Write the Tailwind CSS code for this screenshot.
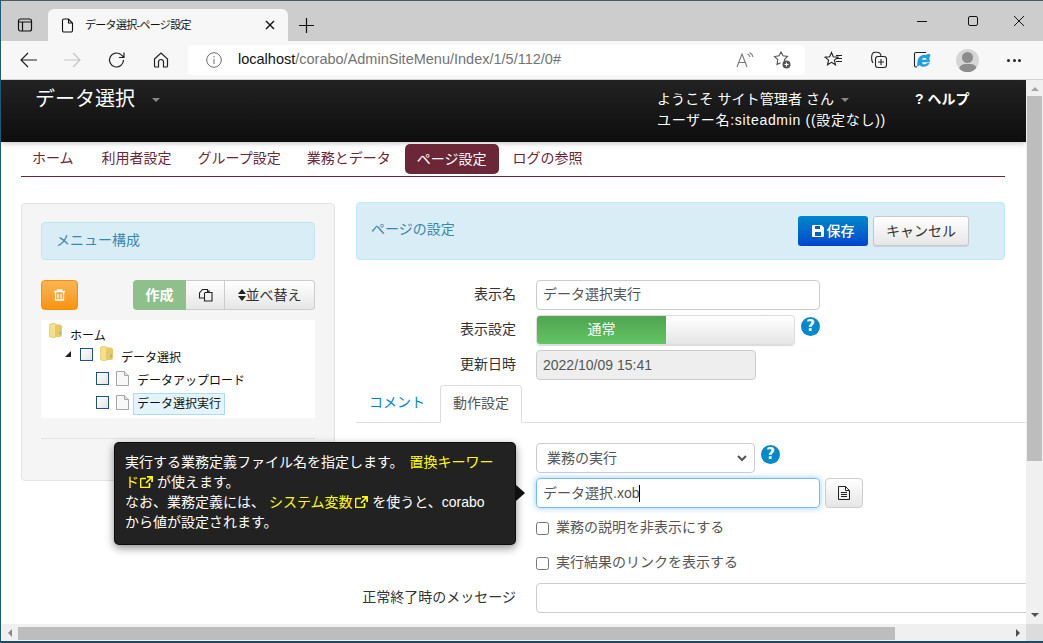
<!DOCTYPE html>
<html lang="ja">
<head>
<meta charset="utf-8">
<script src="https://cdn.jsdelivr.net/npm/@tailwindcss/browser@4"></script>
<title>データ選択-ページ設定</title>
</head>
<body class="m-0 overflow-hidden bg-white">
<div class="w-[1043px] h-[643px] flex flex-col overflow-hidden relative border-t border-t-[#4a5a66] border-l border-l-[#1c5a7a] border-b-[2px] border-b-[#1c4a60] text-[14px] text-[#333] font-['Liberation_Sans','Noto_Sans_CJK_JP',sans-serif]">

  <!-- tab strip -->
  <div class="h-[40px] shrink-0 bg-[#cdcdcd] flex items-end text-[#111]">
    <div class="w-[47px] h-[31px] flex items-start justify-center pt-[7px]">
      <svg width="16" height="16" viewBox="0 0 16 16" fill="none" stroke="#111" stroke-width="1.2"><rect x="1.500" y="2" width="13" height="12" rx="2"/><path d="M1.500 5h13M5.500 5v9" /></svg>
    </div>
    <div class="w-[240px] h-[32px] bg-[#f7f7f7] rounded-t-[6px] flex items-center pl-[13px] pr-[13px]">
      <svg width="13" height="15" viewBox="0 0 13 15" fill="none" stroke="#111" stroke-width="1.100"><path d="M1.500 2.500a1.500 1.500 0 0 1 1.500-1.500h4.500l4 4v7.500a1.500 1.500 0 0 1-1.500 1.500h-7a1.500 1.500 0 0 1-1.500-1.500zM7.500 1v4h4"/></svg>
      <span class="ml-[11px] text-[11px] tracking-[-0.7px] flex-1 whitespace-nowrap">データ選択-ページ設定</span>
      <svg width="10" height="10" viewBox="0 0 10 10" stroke="#111" stroke-width="1.400"><path d="M1 1l8 8M9 1l-8 8"/></svg>
    </div>
    <div class="w-[36px] h-[32px] flex items-center justify-center">
      <svg width="15" height="15" viewBox="0 0 15 15" stroke="#111" stroke-width="1.200"><path d="M7.500 0v15M0 7.500h15"/></svg>
    </div>
    <div class="flex-1"></div>
    <div class="h-[40px] flex items-center pr-[14px] gap-[26px]">
      <svg width="20" height="20" viewBox="0 0 20 20" stroke="#111" stroke-width="1"><path d="M0 10.500h10"/></svg>
      <svg width="20" height="20" viewBox="0 0 20 20" fill="none" stroke="#111" stroke-width="1"><rect x="5.500" y="5.500" width="9" height="9" rx="1.500"/></svg>
      <svg width="20" height="20" viewBox="0 0 20 20" stroke="#111" stroke-width="1"><path d="M5 5l10 10M15 5l-10 10"/></svg>
    </div>
  </div>

  <!-- toolbar -->
  <div class="h-[39px] shrink-0 bg-[#f7f7f7] border-b border-b-[#d4d4d4] flex items-center">
    <div class="w-[187px] flex items-center pl-[19px]">
      <svg width="18" height="16" viewBox="0 0 18 16" fill="none" stroke="#222" stroke-width="1.200"><path d="M17 8H1M8 1L1 8l7 7"/></svg>
      <svg class="ml-[25px]" width="18" height="16" viewBox="0 0 18 16" fill="none" stroke="#c4c4c4" stroke-width="1.200"><path d="M1 8h16M10 1l7 7-7 7"/></svg>
      <svg class="ml-[27px]" width="18" height="18" viewBox="0 0 18 18" fill="none" stroke="#222" stroke-width="1.200"><path d="M15.500 9a7 7 0 1 1-2.200-5.100L16 6.500M16 1.500v5h-5"/></svg>
      <svg class="ml-[27px]" width="16" height="16" viewBox="0 0 16 16" fill="none" stroke="#222" stroke-width="1.200"><path d="M1.500 7L8 1l6.500 6v7a1 1 0 0 1-1 1H10.500V10a2.500 2.500 0 0 0-5 0v5H2.500a1 1 0 0 1-1-1z"/></svg>
    </div>
    <div class="w-[617px] h-[30px] bg-white rounded-[4px] flex items-center pl-[18px] pr-[13px]">
      <svg width="16" height="16" viewBox="0 0 16 16" fill="none" stroke="#6b6b6b" stroke-width="1"><circle cx="8" cy="8" r="7.300"/><path d="M8 7v5M8 4v1.500"/></svg>
      <span class="ml-[16px] text-[14.500px] text-[#737373] flex-1 whitespace-nowrap"><span class="text-[#111]">localhost</span>/corabo/AdminSiteMenu/Index/1/5/112/0#</span>
      <svg width="18" height="16" viewBox="0 0 18 16" fill="none" stroke="#777" stroke-width="1.100"><path d="M1 15L6 2l5 13M2.800 10.500h6.400M11.500 2c1.500.7 2.300 1.700 2.500 3M13.500 0.500c2 1 3.200 2.500 3.500 4.500"/></svg>
      <svg class="ml-[18px]" width="20" height="18" viewBox="0 0 20 18" fill="none" stroke="#555" stroke-width="1.100"><path d="M12.200 11.500l.3-3 3-3-4.500-.7L9 1 7 4.800l-4.500.7 3.300 3.200-.8 4.800 3.500-1.800"/><circle cx="14.500" cy="13.500" r="4" fill="#555" stroke="none"/><path d="M14.500 11.500v4M12.500 13.500h4" stroke="#fff"/></svg>
    </div>
    <div class="flex items-center pl-[19px]">
      <svg width="20" height="18" viewBox="0 0 20 18" fill="none" stroke="#222" stroke-width="1.100"><path d="M7.500 1.500l1.800 4.300 4.700.4-3.600 3 1.100 4.600-4-2.500-4 2.500 1.100-4.600L1 6.200l4.700-.4zM13 7.500h5M12 10.500h6M12 4.500h6"/></svg>
      <svg class="ml-[26px]" width="18" height="18" viewBox="0 0 18 18" fill="none" stroke="#222" stroke-width="1.100"><path d="M3 12C1 9 1 3 3.500 1.500c1.500-.7 5 0 6 .5s1.500 3 1.500 3.500"/><rect x="5.500" y="5.500" width="11" height="11" rx="2.500"/><path d="M11 8v6M8 11h6"/></svg>
      <svg class="ml-[25px]" width="18" height="18" viewBox="0 0 18 18" fill="none"><path d="M4 16H3a1.500 1.500 0 0 1-1.500-1.500V3A1.500 1.500 0 0 1 3 1.500h10" stroke="#222" stroke-width="1.100"/><path d="M4.500 10.500c0-4.500 5-8 8.500-6.500 1-.8 3-1.500 4-.8.700.8 0 2.500-.8 3.800.6 1.300.8 2.700.6 4.200H9c.3 2.500 3.500 2.700 5 .8h2.700c-1.500 4-8 5-10.200 2-.7 1-1.500 1.500-2 1.500-.7-1 0-3.500 0-5zM9 8.700h4.700C13.500 6 9.300 6 9 8.700z" fill="#1fa0e0"/></svg>
      <div class="ml-[25px] w-[23px] h-[23px] rounded-full bg-[#d6d6d6] overflow-hidden flex flex-col items-center">
        <div class="w-[11px] h-[11px] rounded-full bg-[#8c8c8c] mt-[3px] shrink-0"></div>
        <div class="w-[18px] h-[12px] rounded-full bg-[#8c8c8c] mt-[1px] shrink-0"></div>
      </div>
      <div class="ml-[28px] flex gap-[2.500px]">
        <span class="w-[3px] h-[3px] rounded-full bg-[#222]"></span><span class="w-[3px] h-[3px] rounded-full bg-[#222]"></span><span class="w-[3px] h-[3px] rounded-full bg-[#222]"></span>
      </div>
    </div>
  </div>

  <!-- viewport -->
  <div class="flex-1 min-h-0 flex flex-col">
    <div class="flex-1 min-h-0 flex">
      <main class="w-[1025px] shrink-0 overflow-hidden bg-white flex flex-col">
        <!-- app header -->
        <header class="h-[62px] shrink-0 bg-gradient-to-b from-[#222222] to-[#0e0e0e] text-white flex shadow-[0_1px_6px_rgba(0,0,0,0.25)]">
          <div class="w-[656px] pl-[34px] pt-[5px] flex items-start">
            <span class="text-[20px] leading-[28px]">データ選択</span>
            <span class="ml-[17px] mt-[13px] w-0 h-0 border-x-[4px] border-x-transparent border-t-[4px] border-t-[#888]"></span>
          </div>
          <div class="w-[258px] pt-[9px] text-[14px] leading-[21px]">
            <div class="flex items-center whitespace-nowrap tracking-[0.1px]">ようこそ サイト管理者 さん<span class="ml-[7px] w-0 h-0 border-x-[4px] border-x-transparent border-t-[4px] border-t-[#888]"></span></div>
            <div class="whitespace-nowrap tracking-[0.7px]">ユーザー名:siteadmin ((設定なし))</div>
          </div>
          <div class="pt-[9px] text-[14px] leading-[21px] font-bold whitespace-nowrap">? ヘルプ</div>
        </header>

        <!-- nav -->
        <nav class="mx-[20px] w-[984px] h-[35px] shrink-0 border-b border-b-[#6b2737] flex items-start pt-[1px] text-[14px] text-[#6b2737] leading-[30px]">
          <a class="px-[11px]">ホーム</a>
          <a class="ml-[6px] px-[11px]">利用者設定</a>
          <a class="ml-[4px] px-[11px]">グループ設定</a>
          <a class="ml-[4px] px-[11px]">業務とデータ</a>
          <a class="ml-[3px] mt-[1px] px-[12px] bg-[#6b2737] text-white rounded-[5px]">ページ設定</a>
          <a class="ml-[3px] px-[11px]">ログの参照</a>
        </nav>

        <div class="flex items-start pl-[20px] pt-[26px] w-[1025px] shrink-0">
          <!-- left panel -->
          <aside class="w-[314px] h-[278px] shrink-0 bg-[#f5f5f5] border border-[#e3e3e3] rounded-[4px] px-[19px] pt-[18px]">
            <div class="h-[38px] bg-[#d9edf7] border border-[#bce8f1] rounded-[4px] pl-[14px] leading-[34px] text-[#3a87ad]">メニュー構成</div>
            <div class="mt-[20px] flex justify-between">
              <button class="w-[37px] h-[30px] rounded-[4px] border border-[#f0900f] bg-gradient-to-b from-[#fbb450] to-[#f89406] flex items-center justify-center">
                <svg width="11" height="12" viewBox="0 0 11 12" fill="none" stroke="#fff" stroke-width="1.300"><path d="M0 2.500h11M3.500 2.500V1h4v1.500M1.500 3v8h8V3M4 5v4.500M7 5v4.500"/></svg>
              </button>
              <div class="flex h-[30px]">
                <button class="w-[53px] bg-[#8fc08b] text-white font-bold rounded-l-[4px] text-[14px]">作成</button>
                <button class="w-[39px] border-y border-r border-[#ccc] bg-gradient-to-b from-white to-[#e6e6e6] flex items-center justify-center">
                  <svg width="15" height="14" viewBox="0 0 15 14" fill="none" stroke="#222" stroke-width="1.100"><path d="M7 4.500h3.500l3.500 0v8.500H6.500V4.500M6.500 10H1.500V5L4.500 1.500H9.500V4.500M9.500 4.500L11.500 2.500"/></svg>
                </button>
                <button class="w-[90px] border-y border-r border-[#ccc] rounded-r-[4px] bg-gradient-to-b from-white to-[#e6e6e6] text-[#333] text-[14px] whitespace-nowrap flex items-center justify-center">
                  <svg width="8" height="12" viewBox="0 0 8 12" fill="#222"><path d="M4 0l4 5H0zM4 12l4-5H0z"/></svg>並べ替え
                </button>
              </div>
            </div>
            <div class="mt-[10px] h-[98px] bg-white pl-[8px] text-[12px] text-[#111]">
              <div class="h-[22px] flex items-center">
                <svg width="13" height="16" viewBox="0 0 13 15"><rect x="0" y="0" width="8" height="14" rx="3" fill="#f3e08a" stroke="#d6bd5a" stroke-width=".6"/><rect x="6" y="1" width="7" height="12.500" rx="2.500" fill="#e6c965"/><rect x="10.500" y="8" width="1.500" height="3" fill="#7fb6d6"/></svg>
                <span class="ml-[8px] pt-[10px]">ホーム</span>
              </div>
              <div class="h-[24px] flex items-center pl-[16px]">
                <span class="w-0 h-0 border-l-[6px] border-l-transparent border-b-[6px] border-b-[#222]"></span>
                <span class="ml-[9px] w-[13px] h-[13px] border-[1.500px] border-[#1c5485] bg-gradient-to-br from-white to-[#e4e4e4]"></span>
                <svg class="ml-[7px]" width="13" height="16" viewBox="0 0 13 15"><rect x="0" y="0" width="8" height="14" rx="3" fill="#f3e08a" stroke="#d6bd5a" stroke-width=".6"/><rect x="6" y="1" width="7" height="12.500" rx="2.500" fill="#e6c965"/><rect x="10.500" y="8" width="1.500" height="3" fill="#7fb6d6"/></svg>
                <span class="ml-[8px] pt-[8px]">データ選択</span>
              </div>
              <div class="h-[24px] flex items-center pl-[47px]">
                <span class="w-[13px] h-[13px] border-[1.500px] border-[#1c5485] bg-gradient-to-br from-white to-[#e4e4e4]"></span>
                <svg class="ml-[7px]" width="13" height="15" viewBox="0 0 13 15"><path d="M.5.500h8l4 4v10H.5z" fill="#f8f8f8" stroke="#a5a5a5"/><path d="M8.500.500v4h4" fill="#e4e4e4" stroke="#a5a5a5"/></svg>
                <span class="ml-[8px] pt-[6px]">データアップロード</span>
              </div>
              <div class="h-[24px] flex items-center pl-[47px]">
                <span class="w-[13px] h-[13px] border-[1.500px] border-[#1c5485] bg-gradient-to-br from-white to-[#e4e4e4]"></span>
                <svg class="ml-[7px]" width="13" height="15" viewBox="0 0 13 15"><path d="M.5.500h8l4 4v10H.5z" fill="#f8f8f8" stroke="#a5a5a5"/><path d="M8.500.500v4h4" fill="#e4e4e4" stroke="#a5a5a5"/></svg>
                <span class="ml-[4px] mt-[3px] px-[3px] h-[22px] leading-[20px] border border-[#a8dcfa] bg-[#e3f4fd]">データ選択実行</span>
              </div>
            </div>
            <div class="mt-[20px] border-t border-[#e3e3e3]"></div>
          </aside>

          <!-- right column -->
          <section class="ml-[21px] -mt-px w-[670px] shrink-0">
            <div class="w-[649px] h-[58px] bg-[#d9edf7] border border-[#bce8f1] rounded-[4px] flex items-center pl-[14px]">
              <span class="text-[#3a87ad] flex-1 text-[14px] pb-[3px]">ページの設定</span>
              <button class="w-[70px] h-[30px] rounded-[3px] bg-gradient-to-b from-[#0088cc] to-[#0044cc] text-white text-[14px] font-medium flex items-center justify-center gap-[3px]">
                <svg width="12" height="12" viewBox="0 0 12 12"><path d="M0 1a1 1 0 0 1 1-1h8.500L12 2.500V11a1 1 0 0 1-1 1H1a1 1 0 0 1-1-1z" fill="#fff"/><path d="M3 1h5v3H3zM3 7h6v4H3z" fill="#0a5cc8"/></svg>保存
              </button>
              <button class="ml-[5px] mr-[35px] w-[96px] h-[30px] rounded-[3px] border border-[#c8c8c8] bg-gradient-to-b from-white to-[#e6e6e6] text-[#333] text-[14px] shadow-[0_1px_1px_rgba(0,0,0,0.1)]">キャンセル</button>
            </div>

            <div class="mt-[20px] flex items-center h-[30px]">
              <label class="w-[160px] text-right pb-[2px]">表示名</label>
              <div class="ml-[20px] w-[284px] h-[30px] border border-[#ccc] rounded-[4px] px-[6px] leading-[26px] text-[#555]">データ選択実行</div>
            </div>
            <div class="mt-[5px] flex items-center h-[30px]">
              <label class="w-[160px] text-right pb-[2px]">表示設定</label>
              <div class="ml-[20px] w-[259px] h-[30px] border border-[#ddd] rounded-[4px] overflow-hidden flex bg-gradient-to-b from-white to-[#e6e6e6] shadow-[0_1px_1px_rgba(0,0,0,0.15)]">
                <div class="w-[129px] bg-gradient-to-b from-[#51a351] to-[#62c462] text-white text-center leading-[27px] text-[14px]">通常</div>
              </div>
              <span class="ml-[6px] mb-[7px] w-[19px] h-[19px] rounded-full bg-[#0088cc] text-white text-[15px] font-bold leading-[19px] text-center font-['DejaVu_Sans',sans-serif]">?</span>
            </div>
            <div class="mt-[5px] flex items-center h-[30px]">
              <label class="w-[160px] text-right pb-[2px]">更新日時</label>
              <div class="ml-[20px] w-[220px] h-[30px] border border-[#ccc] rounded-[4px] bg-[#eee] px-[6px] leading-[28px] text-[#555]">2022/10/09 15:41</div>
            </div>

            <div class="mt-[5px] h-[38px] border-b border-[#ddd] flex items-end pl-[13px]">
              <a class="w-[71px] h-[37px] leading-[34px] text-[#0088cc]">コメント</a>
              <a class="w-[82px] h-[38px] border border-[#ddd] border-b-white rounded-t-[4px] bg-white text-center leading-[34px] text-[#555] relative top-px">動作設定</a>
            </div>

            <div class="mt-[20px] ml-[180px] flex items-start h-[30px]">
              <div class="w-[219px] h-[30px] border border-[#ccc] rounded-[4px] pl-[10px] pr-[7px] flex items-center justify-between text-[14px] text-[#555]">
                業務の実行
                <svg width="10" height="7" viewBox="0 0 10 7" fill="none" stroke="#555" stroke-width="2"><path d="M1 1l4 4 4-4"/></svg>
              </div>
              <span class="ml-[6px] w-[19px] h-[19px] mt-[2px] rounded-full bg-[#0088cc] text-white text-[15px] font-bold leading-[19px] text-center font-['DejaVu_Sans',sans-serif]">?</span>
            </div>
            <div class="mt-[5px] ml-[180px] flex h-[30px]">
              <div class="w-[284px] h-[30px] border border-[#74bdf0] rounded-[4px] pl-[6px] flex items-center text-[#555] shadow-[0_0_6px_rgba(82,168,236,0.6)]">データ選択.xob<span class="w-px h-[17px] bg-black"></span></div>
              <button class="ml-[5px] w-[38px] h-[30px] border border-[#ccc] rounded-[4px] bg-gradient-to-b from-white to-[#e6e6e6] flex items-center justify-center">
                <svg width="12" height="14" viewBox="0 0 12 14" fill="none" stroke="#222" stroke-width="1"><path d="M.5.500h7l4 4v9h-11zM7.500.500v4h4M3 6.500h6M3 8.500h6M3 10.500h6"/></svg>
              </button>
            </div>
            <div class="mt-[10px] ml-[180px] flex items-center h-[18px] text-[#555]">
              <span class="w-[13px] h-[13px] border border-[#767676] rounded-[2.500px] bg-white mt-[2px]"></span>
              <span class="ml-[7px]">業務の説明を非表示にする</span>
            </div>
            <div class="mt-[17px] ml-[180px] flex items-center h-[18px] text-[#555]">
              <span class="w-[13px] h-[13px] border border-[#767676] rounded-[2.500px] bg-white mt-[2px]"></span>
              <span class="ml-[7px]">実行結果のリンクを表示する</span>
            </div>
            <div class="mt-[12px] flex items-center h-[30px] w-[720px]">
              <label class="w-[160px] text-right whitespace-nowrap pb-[2px]">正常終了時のメッセージ</label>
              <div class="ml-[20px] w-[540px] h-[30px] border border-[#ccc] rounded-[4px] bg-white"></div>
            </div>
          </section>
        </div>
      </main>

      <!-- vertical scrollbar -->
      <div class="w-[17px] shrink-0 bg-[#f0f0f0] flex flex-col items-center justify-between">
        <div class="w-full flex flex-col items-center">
          <span class="mt-[7px] w-0 h-0 border-x-[4px] border-x-transparent border-b-[4px] border-b-[#a3a3a3]"></span>
          <div class="mt-[5px] w-[15px] h-[365px] bg-[#bdbdbd]"></div>
        </div>
        <span class="mb-[7px] w-0 h-0 border-x-[4px] border-x-transparent border-t-[4px] border-t-[#505050]"></span>
      </div>
    </div>
    <!-- horizontal scrollbar -->
    <div class="h-[17px] shrink-0 bg-[#f0f0f0] flex items-center">
      <div class="w-[17px] flex justify-center"><span class="w-0 h-0 border-y-[4px] border-y-transparent border-r-[4px] border-r-[#8a8a8a]"></span></div>
      <div class="w-[877px] h-[13px] mt-[2px] bg-[#bdbdbd]"></div>
      <div class="flex-1"></div>
      <span class="mr-[6px] w-0 h-0 border-y-[4px] border-y-transparent border-l-[4px] border-l-[#505050]"></span>
      <div class="w-[17px] h-full bg-[#dcdcdc]"></div>
    </div>
  </div>

  <!-- tooltip -->
  <div class="absolute left-[113px] top-[441px] w-[402px] h-[103px] bg-[#222] rounded-[5px] border border-black/60 shadow-[0_3px_8px_rgba(0,0,0,0.45)] px-[10px] pt-[9px] text-white text-[14px] leading-[20px]">
    実行する業務定義ファイル名を指定します。 <span class="text-[#ffff00] ml-[2px]">置換キーワー<br>ド<svg class="inline align-[-1px] ml-[1px]" width="13" height="12" viewBox="0 0 13 12" fill="none" stroke="#ffff00" stroke-width="1.700"><path d="M9.500 7v3.500a1 1 0 0 1-1 1h-7a1 1 0 0 1-1-1v-7a1 1 0 0 1 1-1H6M7 .900h5.100V6M12 1L6 7"/></svg></span> が使えます。<br>
    なお、業務定義には、 <span class="text-[#ffff00]">システム変数<svg class="inline align-[-1px] ml-[3px]" width="13" height="12" viewBox="0 0 13 12" fill="none" stroke="#ffff00" stroke-width="1.700"><path d="M9.500 7v3.500a1 1 0 0 1-1 1h-7a1 1 0 0 1-1-1v-7a1 1 0 0 1 1-1H6M7 .900h5.100V6M12 1L6 7"/></svg></span> を使うと、corabo<br>から値が設定されます。
    <span class="absolute right-[-10px] top-[42px] w-0 h-0 border-y-[8px] border-y-transparent border-l-[9px] border-l-[#111]"></span>
  </div>
</div>
</body>
</html>
